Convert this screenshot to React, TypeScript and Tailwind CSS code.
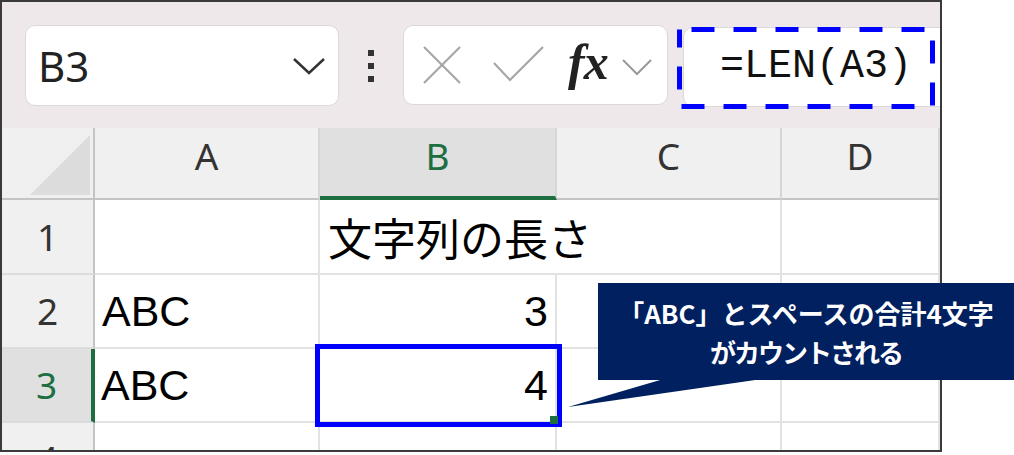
import React from "react";

const hdr =
  "flex items-center justify-center bg-[#f0f0f0] border-r-2 border-r-[#d6d6d6] border-b-2 border-b-[#c4c4c4] text-[37px] text-[#333] font-['Noto_Sans',sans-serif] pb-[14px]";
const rowHdr =
  "flex items-center justify-center bg-[#f0f0f0] border-r-2 border-r-[#c4c4c4] border-b-2 border-b-[#dcdcdc] text-[37px] text-[#333] font-['Noto_Sans',sans-serif]";
const cell =
  "flex items-center border-r-2 border-b-2 border-[#e2e2e2] text-[43px] text-black font-['Liberation_Sans','Noto_Sans_CJK_JP',sans-serif] whitespace-nowrap";

export default function App() {
  return (
    <div className="relative w-[1014px] h-[455px] bg-white overflow-hidden">
      <div className="w-[942px] h-[452px] border-2 border-[#3a3a3a] overflow-hidden flex flex-col bg-white">
        {/* Title / formula bar */}
        <div className="h-[126px] shrink-0 bg-[#eee8eb] flex items-start pt-[23px] pl-[23px]">
          {/* Name box */}
          <div className="w-[314px] h-[81px] shrink-0 bg-white rounded-[10px] border border-[#dcd8da] flex items-center pl-[12px]">
            <span className="text-[42px] text-[#222] font-['Noto_Sans',sans-serif] leading-none">B3</span>
            <svg className="ml-auto mr-[13px]" width="32" height="18" viewBox="0 0 32 18">
              <polyline points="1,2 16,16 31,2" fill="none" stroke="#333" strokeWidth="2.5" />
            </svg>
          </div>
          {/* dots */}
          <div className="ml-[29px] mt-[25px] flex flex-col gap-[7px] shrink-0">
            <div className="w-[6px] h-[6px] bg-[#333]" />
            <div className="w-[6px] h-[6px] bg-[#333]" />
            <div className="w-[6px] h-[6px] bg-[#333]" />
          </div>
          {/* buttons box */}
          <div className="ml-[29px] w-[265px] h-[80px] shrink-0 bg-white rounded-[10px] border border-[#dcd8da] flex items-center pl-[19px]">
            <svg width="38" height="38" viewBox="0 0 38 38">
              <line x1="1" y1="1" x2="37" y2="37" stroke="#a6a6a6" strokeWidth="2.2" />
              <line x1="37" y1="1" x2="1" y2="37" stroke="#a6a6a6" strokeWidth="2.2" />
            </svg>
            <svg className="ml-[32px] -mt-[3px]" width="51" height="36" viewBox="0 0 51 36">
              <polyline points="1,17 17,34 50,1" fill="none" stroke="#a6a6a6" strokeWidth="2.2" />
            </svg>
            <span className="ml-[24px] text-[50px] italic font-bold text-[#222] font-['Liberation_Serif',serif] leading-none -mt-[6px] tracking-[-1px]">
              fx
            </span>
            <svg className="ml-[14px] mt-[4px]" width="30" height="18" viewBox="0 0 30 18">
              <polyline points="1,2 15,16 29,2" fill="none" stroke="#9a9a9a" strokeWidth="2" />
            </svg>
          </div>
          {/* formula input */}
          <div className="ml-[15px] mt-[2px] w-[300px] h-[80px] shrink-0 bg-white rounded-[10px] border border-[#dcd8da] flex items-center pl-[36px]">
            <span className="text-[40px] text-[#111] font-['Liberation_Mono',monospace] leading-none">=LEN(A3)</span>
          </div>
        </div>

        {/* Grid */}
        <div className="grid grid-cols-[93px_225px_237px_225px_1fr] grid-rows-[72px_75px_74px_74px_74px] bg-white">
          {/* header row */}
          <div className="relative bg-[#f0f0f0] border-r-2 border-r-[#c4c4c4] border-b-2 border-b-[#c4c4c4]">
            <svg className="absolute left-[28px] top-[7px]" width="62" height="62" viewBox="0 0 62 62">
              <polygon points="0,60 60,60 60,0" fill="#dcdcdc" />
            </svg>
          </div>
          <div className={hdr}>A</div>
          <div className="flex items-center justify-center bg-[#e0e0e0] border-r-2 border-r-[#d6d6d6] border-b-4 border-b-[#1d6f42] text-[37px] text-[#1d6f42] font-['Noto_Sans',sans-serif] pb-[12px]">
            B
          </div>
          <div className={hdr}>C</div>
          <div className={hdr}>D</div>

          {/* row 1 */}
          <div className={rowHdr}>1</div>
          <div className={cell}></div>
          <div className="flex items-center border-b-2 border-[#e2e2e2] text-[44px] text-black font-['Noto_Sans_CJK_JP',sans-serif] whitespace-nowrap pl-[8px] overflow-visible">
            文字列の長さ
          </div>
          <div className={cell}></div>
          <div className={cell}></div>

          {/* row 2 */}
          <div className={rowHdr}>2</div>
          <div className={`${cell} pl-[7px]`}>ABC</div>
          <div className={`${cell} justify-end pr-[7px]`}>3</div>
          <div className={cell}></div>
          <div className={cell}></div>

          {/* row 3 */}
          <div className="flex items-center justify-center bg-[#e0e0e0] border-r-4 border-r-[#1d6f42] border-b-2 border-b-[#dcdcdc] text-[37px] text-[#1d6f42] font-['Noto_Sans',sans-serif]">
            3
          </div>
          <div className={`${cell} pl-[6px]`}>ABC</div>
          <div className={`${cell} justify-end pr-[7px]`}>4</div>
          <div className={cell}></div>
          <div className={cell}></div>

          {/* row 4 */}
          <div className={rowHdr}>4</div>
          <div className={cell}></div>
          <div className={cell}></div>
          <div className={cell}></div>
          <div className={cell}></div>
        </div>
      </div>

      {/* dashed highlight around formula */}
      <svg className="absolute left-[677px] top-[27px] pointer-events-none" width="258" height="82" viewBox="0 0 258 82">
        <rect
          x="2.5"
          y="2.5"
          width="253"
          height="77"
          fill="none"
          stroke="#0000ff"
          strokeWidth="5"
          strokeDasharray="23 19"
          strokeDashoffset="-12"
        />
      </svg>

      {/* selected cell highlight */}
      <div className="absolute left-[315px] top-[344px] w-[247px] h-[83px] border-[5px] border-[#0000ff] pointer-events-none" />
      <div className="absolute left-[550px] top-[416px] w-[8px] h-[8px] bg-[#1d6f42]" />

      {/* callout tail */}
      <svg className="absolute left-0 top-0 pointer-events-none" width="1014" height="455" viewBox="0 0 1014 455">
        <polygon points="667,378 770,378 568,407" fill="#002060" />
      </svg>

      {/* callout */}
      <div className="absolute left-[598px] top-[283px] w-[416px] h-[97px] bg-[#002060] flex flex-col items-center justify-center text-white font-bold text-[26px] leading-[39px] font-['Noto_Sans_CJK_JP',sans-serif]">
        <div className="tracking-[0px]">「ABC」とスペースの合計4文字</div>
        <div className="tracking-[-2px]">がカウントされる</div>
      </div>
    </div>
  );
}
